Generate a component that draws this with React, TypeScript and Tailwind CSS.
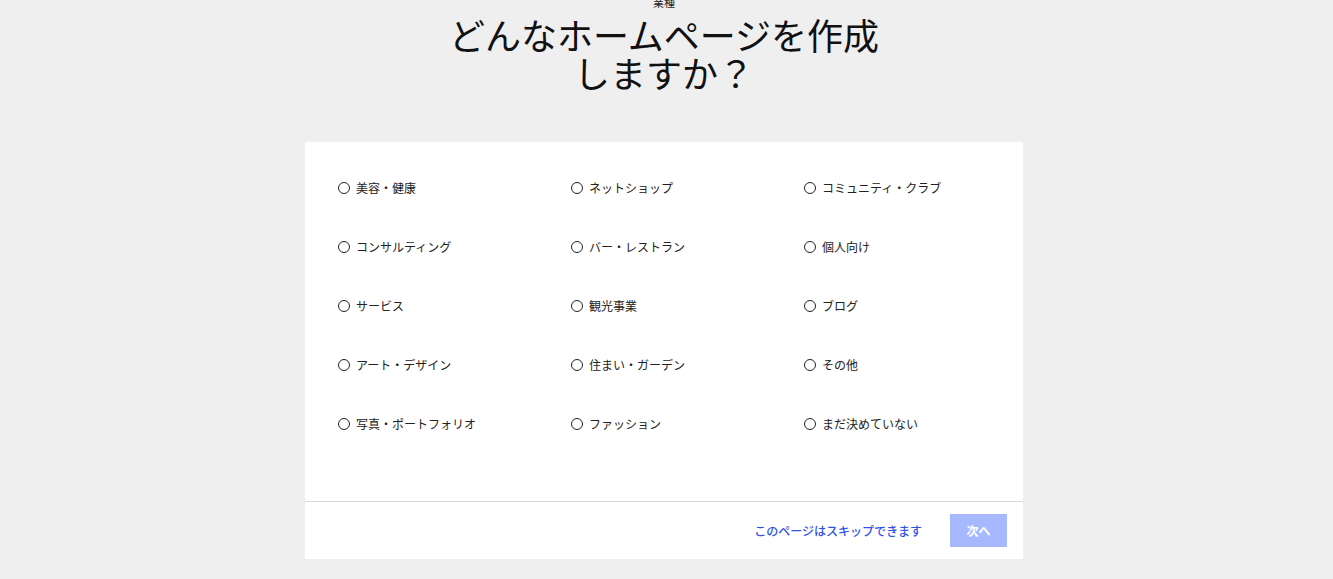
import React from "react";

const options = [
  "美容・健康",
  "ネットショップ",
  "コミュニティ・クラブ",
  "コンサルティング",
  "バー・レストラン",
  "個人向け",
  "サービス",
  "観光事業",
  "ブログ",
  "アート・デザイン",
  "住まい・ガーデン",
  "その他",
  "写真・ポートフォリオ",
  "ファッション",
  "まだ決めていない",
];

export default function App() {
  return (
    <div
      className="min-h-[579px] w-full bg-[#efefef] flex flex-col items-center overflow-hidden pr-[5px]"
      style={{ fontFamily: '"Noto Sans CJK JP", "Noto Sans", sans-serif' }}
    >
      <div className="text-[11px] leading-[11px] -mt-[3px] text-[#222]">業種</div>
      <h1 className="mt-[7px] text-[36px] leading-[38px] font-normal text-[#111] text-center">
        どんなホームページを作成
        <br />
        しますか？
      </h1>
      <div className="mt-[51px] w-[718px] bg-white flex flex-col">
        <div className="grid grid-cols-[233px_233px_233px] pl-[33px] pt-[16px] pb-[48px]">
          {options.map((o) => (
            <label key={o} className="h-[59px] flex items-center gap-[6px] cursor-pointer">
              <span className="w-[12px] h-[12px] rounded-full border-[1.6px] border-[#222] shrink-0 box-border" />
              <span className="text-[12px] text-[#222] leading-none">{o}</span>
            </label>
          ))}
        </div>
        <div className="border-t border-[#d5dadc] h-[58px] flex items-center justify-end pr-[16px] gap-[28px]">
          <a className="text-[12px] text-[#2f52e6] font-medium cursor-pointer">このページはスキップできます</a>
          <button className="w-[57px] h-[33px] bg-[#a6b9ff] text-white text-[12px] font-bold">次へ</button>
        </div>
      </div>
    </div>
  );
}
